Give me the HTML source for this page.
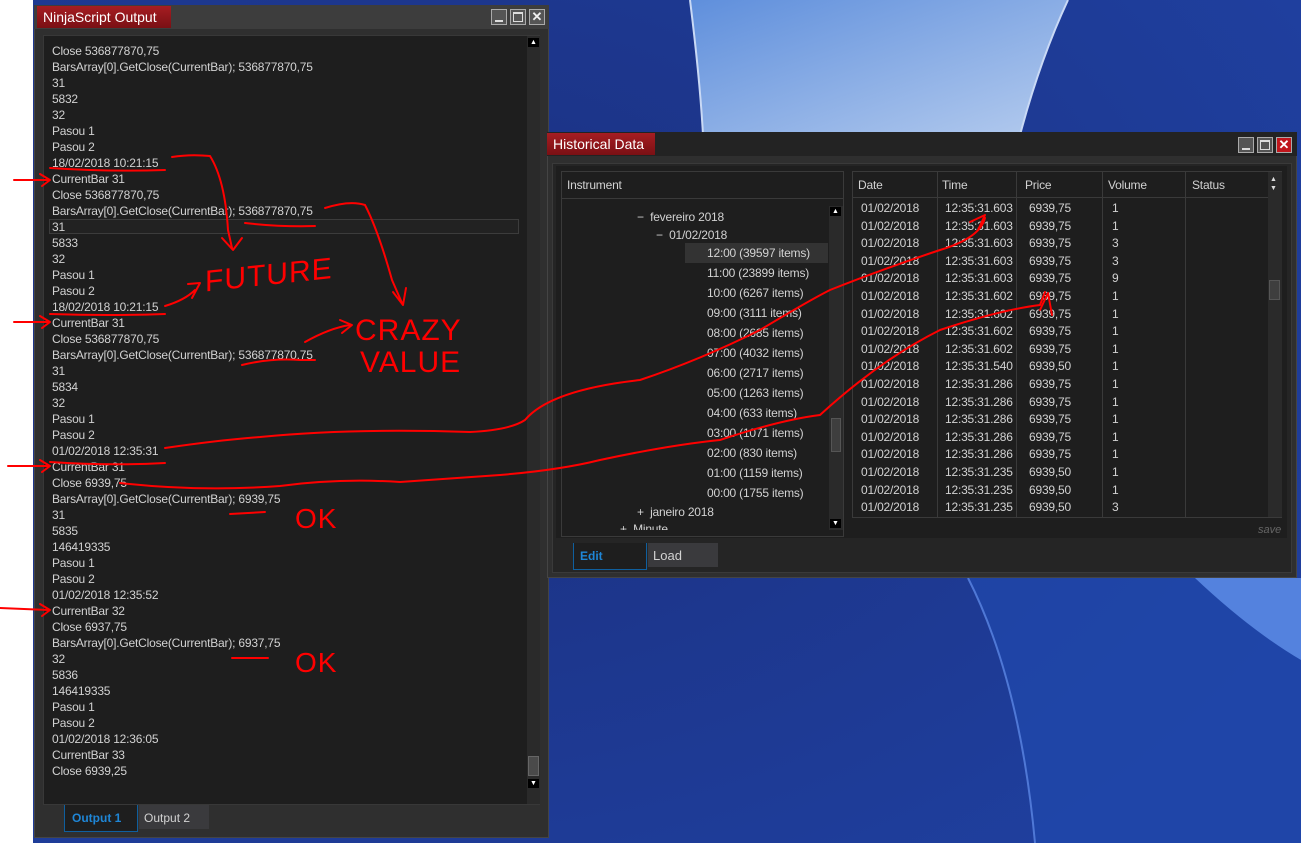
<!DOCTYPE html>
<html><head><meta charset="utf-8"><style>
*{margin:0;padding:0;box-sizing:border-box}
body{width:1301px;height:843px;overflow:hidden;position:relative;font-family:"Liberation Sans",sans-serif;background:#fff}
.a{position:absolute}
.t{position:absolute;font-size:12px;color:#d2d2d2;white-space:nowrap;line-height:14px;letter-spacing:-0.2px}
.btn{position:absolute;width:16px;height:16px;border:1px solid #aaa;background:#555}
</style></head><body>
<svg class="a" style="left:33px;top:0" width="1268" height="843" viewBox="33 0 1268 843">
<defs>
<linearGradient id="w" x1="0" y1="0" x2="1" y2="1"><stop offset="0" stop-color="#5f8fdc"/><stop offset="1" stop-color="#b4cbee"/></linearGradient>
<radialGradient id="r" cx="0.3" cy="0.4" r="0.8"><stop offset="0" stop-color="#1b2f7e"/><stop offset="1" stop-color="#1f3f9e"/></radialGradient>
</defs>
<rect x="33" y="0" width="1268" height="843" fill="url(#r)"/>
<path d="M690 0 Q700 80 703 135 L1020 135 Q1040 60 1068 0 Z" fill="url(#w)"/>
<path d="M690 0 Q700 80 703 135" stroke="#c9d9f5" stroke-width="2" fill="none"/>
<path d="M1068 0 Q1040 60 1020 135" stroke="#c9d9f5" stroke-width="2" fill="none"/>
<path d="M968 578 Q1020 680 1035 843 L1301 843 L1301 578 Z" fill="#1f49ad" opacity="0.7"/>
<path d="M968 578 Q1020 680 1035 843" stroke="#4f78d6" stroke-width="2" fill="none"/>
<path d="M1195 578 Q1250 630 1301 660 L1301 578 Z" fill="#5482de"/>
</svg>

<!-- NinjaScript Output -->
<div class="a" style="left:34px;top:5px;width:515px;height:833px;background:#2f2f2f;border:1px solid #444"></div>
<div class="a" style="left:34px;top:5px;width:515px;height:24px;background:#3d3d3d"></div>
<div class="a" style="left:37px;top:6px;width:134px;height:22px;background:linear-gradient(#a61d22,#7a1014);color:#fff;font-size:14px;padding:3px 0 0 6px">NinjaScript Output</div>
<div class="btn" style="left:491px;top:9px"><div class="a" style="left:3px;top:10px;width:8px;height:2px;background:#ddd"></div></div>
<div class="btn" style="left:510px;top:9px"><div class="a" style="left:2px;top:2px;width:10px;height:10px;border:1px solid #ddd;border-top-width:2px"></div></div>
<div class="btn" style="left:529px;top:9px;color:#eee;font-size:13px;font-weight:bold;text-align:center;line-height:14px">✕</div>
<div class="a" style="left:43px;top:35px;width:497px;height:770px;background:#1e1e1e;border:1px solid #383838"></div>
<div class="a" style="left:527px;top:36px;width:13px;height:768px;background:#2a2a2a"></div>
<div class="a" style="left:528px;top:38px;width:11px;height:9px;background:#000;color:#fff;font-size:7px;text-align:center;line-height:9px">▲</div>
<div class="a" style="left:528px;top:756px;width:11px;height:20px;background:#4a4a4a;border:1px solid #666"></div>
<div class="a" style="left:528px;top:779px;width:11px;height:9px;background:#000;color:#fff;font-size:7px;text-align:center;line-height:9px">▼</div>
<div class="a" style="left:49px;top:219px;width:470px;height:15px;border:1px solid #3c3c3c;background:#222"></div>
<div class="a" style="left:44px;top:36px;width:480px;height:746px;overflow:hidden">
<div style="position:absolute;left:8px;top:7px;font-size:12px;line-height:16px;color:#d2d2d2;white-space:pre;letter-spacing:-0.2px">Close 536877870,75
BarsArray[0].GetClose(CurrentBar); 536877870,75
31
5832
32
Pasou 1
Pasou 2
18/02/2018 10:21:15
CurrentBar 31
Close 536877870,75
BarsArray[0].GetClose(CurrentBar); 536877870,75
31
5833
32
Pasou 1
Pasou 2
18/02/2018 10:21:15
CurrentBar 31
Close 536877870,75
BarsArray[0].GetClose(CurrentBar); 536877870,75
31
5834
32
Pasou 1
Pasou 2
01/02/2018 12:35:31
CurrentBar 31
Close 6939,75
BarsArray[0].GetClose(CurrentBar); 6939,75
31
5835
146419335
Pasou 1
Pasou 2
01/02/2018 12:35:52
CurrentBar 32
Close 6937,75
BarsArray[0].GetClose(CurrentBar); 6937,75
32
5836
146419335
Pasou 1
Pasou 2
01/02/2018 12:36:05
CurrentBar 33
Close 6939,25
BarsArray[0].GetClose(CurrentBar); 6939,25</div></div>
<div class="a" style="left:64px;top:805px;width:74px;height:27px;background:#1e1e1e;border:1px solid #0f5f9e;border-top:none;color:#1f86d6;font-size:12px;font-weight:bold;padding:6px 0 0 7px">Output 1</div>
<div class="a" style="left:139px;top:805px;width:70px;height:24px;background:#3a3a3d;color:#d2d2d2;font-size:12px;padding:6px 0 0 5px">Output 2</div>

<!-- Historical Data -->
<div class="a" style="left:547px;top:132px;width:750px;height:446px;background:#2f2f2f;border:1px solid #444"></div>
<div class="a" style="left:547px;top:132px;width:750px;height:24px;background:#232323"></div>
<div class="a" style="left:547px;top:133px;width:108px;height:22px;background:linear-gradient(#a61d22,#7a1014);color:#fff;font-size:14px;padding:3px 0 0 6px">Historical Data</div>
<div class="btn" style="left:1238px;top:137px"><div class="a" style="left:3px;top:10px;width:8px;height:2px;background:#ddd"></div></div>
<div class="btn" style="left:1257px;top:137px"><div class="a" style="left:2px;top:2px;width:10px;height:10px;border:1px solid #ddd;border-top-width:2px"></div></div>
<div class="btn" style="left:1276px;top:137px;background:#c0161c;color:#fff;font-size:13px;font-weight:bold;text-align:center;line-height:14px">✕</div>
<div class="a" style="left:552px;top:163px;width:740px;height:410px;background:#252525;border:1px solid #3a3a3a"></div>
<div class="a" style="left:556px;top:166px;width:731px;height:372px;background:#1e1e1e"></div>
<div class="a" style="left:561px;top:171px;width:283px;height:366px;background:#1e1e1e;border:1px solid #3a3a3a"></div>
<div class="a" style="left:562px;top:198px;width:281px;height:1px;background:#3a3a3a"></div>
<div class="t" style="left:567px;top:178px">Instrument</div>
<div class="a" style="left:829px;top:206px;width:14px;height:324px;background:#2a2a2a"></div>
<div class="a" style="left:830px;top:207px;width:11px;height:9px;background:#000;color:#fff;font-size:7px;text-align:center;line-height:9px">▲</div>
<div class="a" style="left:831px;top:418px;width:10px;height:34px;background:#3e3e3e;border:1px solid #555"></div>
<div class="a" style="left:830px;top:519px;width:11px;height:9px;background:#000;color:#fff;font-size:7px;text-align:center;line-height:9px">▼</div>
<div class="a" style="left:685px;top:243px;width:143px;height:20px;background:#333"></div>
<div class="a" style="left:562px;top:206px;width:266px;height:324px;overflow:hidden">
<div class="t" style="left:75px;top:4px">−&nbsp; fevereiro 2018</div>
<div class="t" style="left:94px;top:22px">−&nbsp; 01/02/2018</div>
<div class="t" style="left:145px;top:40px">12:00 (39597 items)</div>
<div class="t" style="left:145px;top:60px">11:00 (23899 items)</div>
<div class="t" style="left:145px;top:80px">10:00 (6267 items)</div>
<div class="t" style="left:145px;top:100px">09:00 (3111 items)</div>
<div class="t" style="left:145px;top:120px">08:00 (2685 items)</div>
<div class="t" style="left:145px;top:140px">07:00 (4032 items)</div>
<div class="t" style="left:145px;top:160px">06:00 (2717 items)</div>
<div class="t" style="left:145px;top:180px">05:00 (1263 items)</div>
<div class="t" style="left:145px;top:200px">04:00 (633 items)</div>
<div class="t" style="left:145px;top:220px">03:00 (1071 items)</div>
<div class="t" style="left:145px;top:240px">02:00 (830 items)</div>
<div class="t" style="left:145px;top:260px">01:00 (1159 items)</div>
<div class="t" style="left:145px;top:280px">00:00 (1755 items)</div>
<div class="t" style="left:75px;top:299px">+&nbsp; janeiro 2018</div>
<div class="t" style="left:58px;top:316px">+&nbsp; Minute</div>
</div>
<div class="a" style="left:852px;top:171px;width:430px;height:347px;background:#1e1e1e;border:1px solid #3a3a3a"></div>
<div class="a" style="left:853px;top:197px;width:415px;height:1px;background:#3a3a3a"></div>
<div class="a" style="left:937px;top:172px;width:1px;height:345px;background:#3a3a3a"></div>
<div class="a" style="left:1016px;top:172px;width:1px;height:345px;background:#3a3a3a"></div>
<div class="a" style="left:1102px;top:172px;width:1px;height:345px;background:#3a3a3a"></div>
<div class="a" style="left:1185px;top:172px;width:1px;height:345px;background:#3a3a3a"></div>
<div class="a" style="left:1268px;top:172px;width:14px;height:345px;background:#2a2a2a"></div>
<div class="a" style="left:1270px;top:175px;color:#ddd;font-size:7px;line-height:9px">▲<br>▼</div>
<div class="a" style="left:1269px;top:280px;width:11px;height:20px;background:#3e3e3e;border:1px solid #555"></div>
<div class="t" style="left:858px;top:178px">Date</div>
<div class="t" style="left:942px;top:178px">Time</div>
<div class="t" style="left:1025px;top:178px">Price</div>
<div class="t" style="left:1108px;top:178px">Volume</div>
<div class="t" style="left:1192px;top:178px">Status</div>
<div class="a" style="left:861px;top:200px;font-size:12px;line-height:17.6px;color:#d2d2d2;white-space:pre;letter-spacing:-0.2px">01/02/2018
01/02/2018
01/02/2018
01/02/2018
01/02/2018
01/02/2018
01/02/2018
01/02/2018
01/02/2018
01/02/2018
01/02/2018
01/02/2018
01/02/2018
01/02/2018
01/02/2018
01/02/2018
01/02/2018
01/02/2018</div>
<div class="a" style="left:945px;top:200px;width:68px;overflow:hidden;font-size:12px;line-height:17.6px;color:#d2d2d2;white-space:pre;letter-spacing:-0.2px">12:35:31.603
12:35:31.603
12:35:31.603
12:35:31.603
12:35:31.603
12:35:31.602
12:35:31.602
12:35:31.602
12:35:31.602
12:35:31.540
12:35:31.286
12:35:31.286
12:35:31.286
12:35:31.286
12:35:31.286
12:35:31.235
12:35:31.235
12:35:31.235</div>
<div class="a" style="left:1029px;top:200px;font-size:12px;line-height:17.6px;color:#d2d2d2;white-space:pre;letter-spacing:-0.2px">6939,75
6939,75
6939,75
6939,75
6939,75
6939,75
6939,75
6939,75
6939,75
6939,50
6939,75
6939,75
6939,75
6939,75
6939,75
6939,50
6939,50
6939,50</div>
<div class="a" style="left:1112px;top:200px;font-size:12px;line-height:17.6px;color:#d2d2d2;white-space:pre">1
1
3
3
9
1
1
1
1
1
1
1
1
1
1
1
1
3</div>
<div class="a" style="left:1258px;top:524px;font-size:11px;font-style:italic;color:#666">save</div>
<div class="a" style="left:573px;top:543px;width:74px;height:27px;background:#1e1e1e;border:1px solid #0f5f9e;border-top:none;color:#1f86d6;font-size:12px;font-weight:bold;padding:6px 0 0 6px">Edit</div>
<div class="a" style="left:648px;top:543px;width:70px;height:24px;background:#3a3a3d;color:#d2d2d2;font-size:13px;padding:5px 0 0 5px">Load</div>

<svg class="a" style="left:0;top:0" width="1301" height="843" fill="none" stroke="#f00" stroke-width="2" stroke-linecap="round" stroke-linejoin="round">
<path d="M50 168 Q110 172 165 170"/>
<path d="M172 157 Q190 154 210 156 Q225 180 228 230 L232 248"/><path d="M222 238 L233 250 L242 238"/>
<path d="M325 208 Q350 200 365 205 Q378 230 392 280 L402 303"/><path d="M393 292 L403 305 L406 288"/>
<path d="M245 223 Q280 227 315 226"/>
<path d="M14 180 L48 180"/><path d="M40 174 L50 180 L42 186"/>
<path d="M165 306 Q185 300 195 290"/><path d="M188 284 L200 283 L192 298"/>
<path d="M50 314 Q110 316 165 314"/>
<path d="M14 322 L48 322"/><path d="M40 316 L50 322 L42 328"/>
<path d="M305 342 Q330 328 350 325"/><path d="M340 320 L352 325 L342 333"/>
<path d="M242 365 Q270 358 300 360 L315 360"/>
<path d="M165 448 Q220 440 260 437 Q350 428 470 432 Q510 430 525 420 Q550 390 640 380 Q700 360 760 330 Q810 300 830 290 Q880 270 940 250 Q980 238 985 218"/><path d="M970 222 L985 215 L978 230"/>
<path d="M50 462 Q110 466 165 463"/>
<path d="M8 466 L48 466"/><path d="M40 460 L50 466 L42 472"/>
<path d="M120 483 Q200 492 280 486 Q340 478 400 482 Q460 478 500 475 Q560 470 600 460 Q670 445 720 440 Q780 420 820 415 Q880 360 940 330 Q1000 310 1040 305 L1045 292"/><path d="M1040 310 L1048 293 L1052 315"/>
<path d="M230 514 L265 512"/>
<path d="M0 608 L48 610"/><path d="M40 604 L50 610 L42 616"/>
<path d="M232 658 L268 658"/>
</svg>
<svg class="a" style="left:0;top:0" width="1301" height="843">
<g fill="#f00" font-family="'Liberation Sans',sans-serif" style="letter-spacing:1px">
<text x="205" y="288" transform="skewY(-6) translate(0,25)" font-size="30">FUTURE</text>
<text x="355" y="340" font-size="30">CRAZY</text>
<text x="360" y="372" font-size="30">VALUE</text>
<text x="295" y="528" font-size="28">OK</text>
<text x="295" y="672" font-size="28">OK</text>
</g></svg>
</body></html>
